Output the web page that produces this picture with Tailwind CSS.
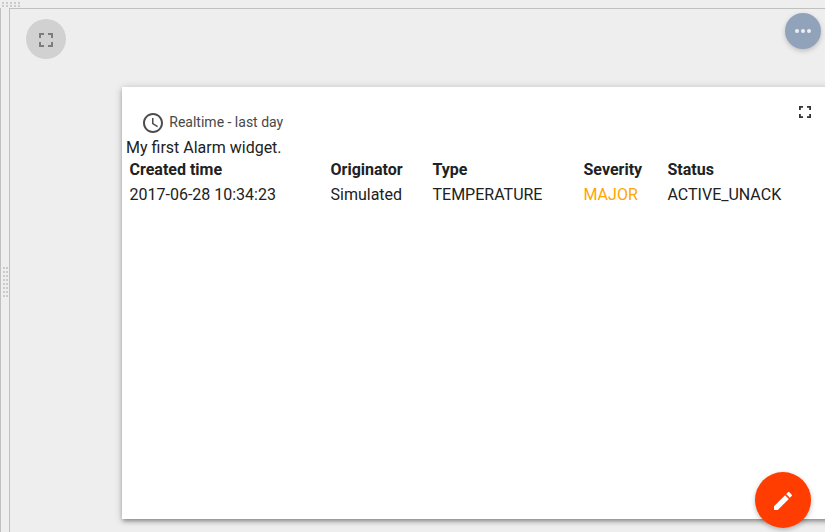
<!DOCTYPE html>
<html lang="en">
<head>
<meta charset="utf-8">
<title>Alarm widget</title>
<script src="https://cdn.jsdelivr.net/npm/@tailwindcss/browser@4"></script>
</head>
<body class="flex h-screen flex-col overflow-hidden bg-[#eeeeee] font-[Roboto,sans-serif] text-[#212121]">
  <div class="h-2 shrink-0 pl-[2px] pt-[2px]">
    <svg class="block" width="18" height="5" fill="#cbcbcb" shape-rendering="crispEdges"><path d="M0 0h2v2H0zM4 0h2v2H4zM8 0h2v2H8zM12 0h2v2h-2zM16 0h2v2h-2zM0 3h2v2H0zM4 3h2v2H4zM8 3h2v2H8zM12 3h2v2h-2zM16 3h2v2h-2z"/></svg>
  </div>
  <div class="flex min-h-0 flex-1">
    <div class="w-[9px] shrink-0 border-l border-[#c0c0c0] pl-[2px] pt-[259px]">
      <svg class="block" width="5" height="30" fill="#cbcbcb" shape-rendering="crispEdges"><path d="M0 0h2v2H0zM3 0h2v2H3zM0 4h2v2H0zM3 4h2v2H3zM0 8h2v2H0zM3 8h2v2H3zM0 12h2v2H0zM3 12h2v2H3zM0 16h2v2H0zM3 16h2v2H3zM0 20h2v2H0zM3 20h2v2H3zM0 24h2v2H0zM3 24h2v2H3zM0 28h2v2H0zM3 28h2v2H3z"/></svg>
    </div>
    <main class="relative flex min-w-0 flex-1 flex-col border-l border-t border-[#c0c0c0]">
      <div class="flex h-[78px] shrink-0 items-start justify-between pl-4 pr-1">
        <button class="mt-[10px] flex size-10 items-center justify-center rounded-full bg-[#d1d1d1]">
          <svg class="relative top-px" width="24" height="24" viewBox="0 0 24 24" fill="#7d7d7d"><path d="M7 14H5v5h5v-2H7v-3zm-2-4h2V7h3V5H5v5zm12 7h-3v2h5v-5h-2v3zM14 5v2h3v3h2V5h-5z"/></svg>
        </button>
        <button class="mt-1 flex size-9 items-center justify-center rounded-full bg-[#91a3bb] shadow-[0_2px_5px_rgba(0,0,0,0.2)]">
          <svg width="24" height="24" viewBox="0 0 24 24" fill="#eeeeee"><path d="M6 10a2 2 0 1 0 0 4 2 2 0 0 0 0-4zm12 0a2 2 0 1 0 0 4 2 2 0 0 0 0-4zm-6 0a2 2 0 1 0 0 4 2 2 0 0 0 0-4z"/></svg>
        </button>
      </div>
      <section class="-mr-4 ml-[112px] h-[432px] shrink-0 bg-white pl-[4.5px] shadow-[0_1px_8px_rgba(0,0,0,0.2),0_3px_4px_rgba(0,0,0,0.2),0_3px_3px_-2px_rgba(0,0,0,0.16)]">
        <div class="flex h-[50px] items-start justify-between pr-6">
          <div class="ml-[14.5px] mt-6 flex items-center text-sm text-[#484848]">
            <svg width="24" height="24" viewBox="0 0 24 24" fill="#4d4d4d"><path d="M11.99 2C6.47 2 2 6.48 2 12s4.47 10 9.99 10C17.52 22 22 17.52 22 12S17.52 2 11.99 2zM12 20c-4.42 0-8-3.58-8-8s3.58-8 8-8 8 3.58 8 8-3.58 8-8 8z"/><path d="M12.5 7H11v6l5.25 3.15.75-1.23-4.5-2.67z"/></svg>
            <span class="relative -top-px ml-[4.3px]">Realtime - last day</span>
          </div>
          <svg class="mr-[6px] mt-[19px]" width="12" height="12" viewBox="0 0 12 12" fill="none" stroke="#333333" stroke-width="1.8"><path d="M.9 4V.9H4M8 .9h3.1V4M11.1 8v3.1H8M4 11.1H.9V8"/></svg>
        </div>
        <p class="-ml-px h-5 pl-[0.5px] text-base leading-[21px]">My first Alarm widget.</p>
        <table class="ml-[3px] w-[680px] table-fixed text-left text-base leading-[25px]">
          <colgroup><col class="w-[201px]"><col class="w-[102px]"><col class="w-[151px]"><col class="w-[84px]"><col></colgroup>
          <thead><tr class="font-bold"><th>Created time</th><th>Originator</th><th>Type</th><th>Severity</th><th>Status</th></tr></thead>
          <tbody><tr><td>2017-06-28 10:34:23</td><td>Simulated</td><td>TEMPERATURE</td><td class="text-[#ffa500]">MAJOR</td><td>ACTIVE_UNACK</td></tr></tbody>
        </table>
      </section>
      <button class="absolute bottom-1 right-[14px] flex size-14 items-center justify-center rounded-full bg-[#ff3d00] shadow-[0_2px_5px_rgba(0,0,0,0.26)]">
        <svg class="relative top-px" width="24" height="24" viewBox="0 0 24 24" fill="#fff"><path d="M3 17.25V21h3.75L17.81 9.94l-3.75-3.75L3 17.25zM20.71 7.04a1 1 0 0 0 0-1.41l-2.34-2.34a1 1 0 0 0-1.41 0l-1.83 1.83 3.75 3.75 1.83-1.83z"/></svg>
      </button>
    </main>
  </div>
</body>
</html>
